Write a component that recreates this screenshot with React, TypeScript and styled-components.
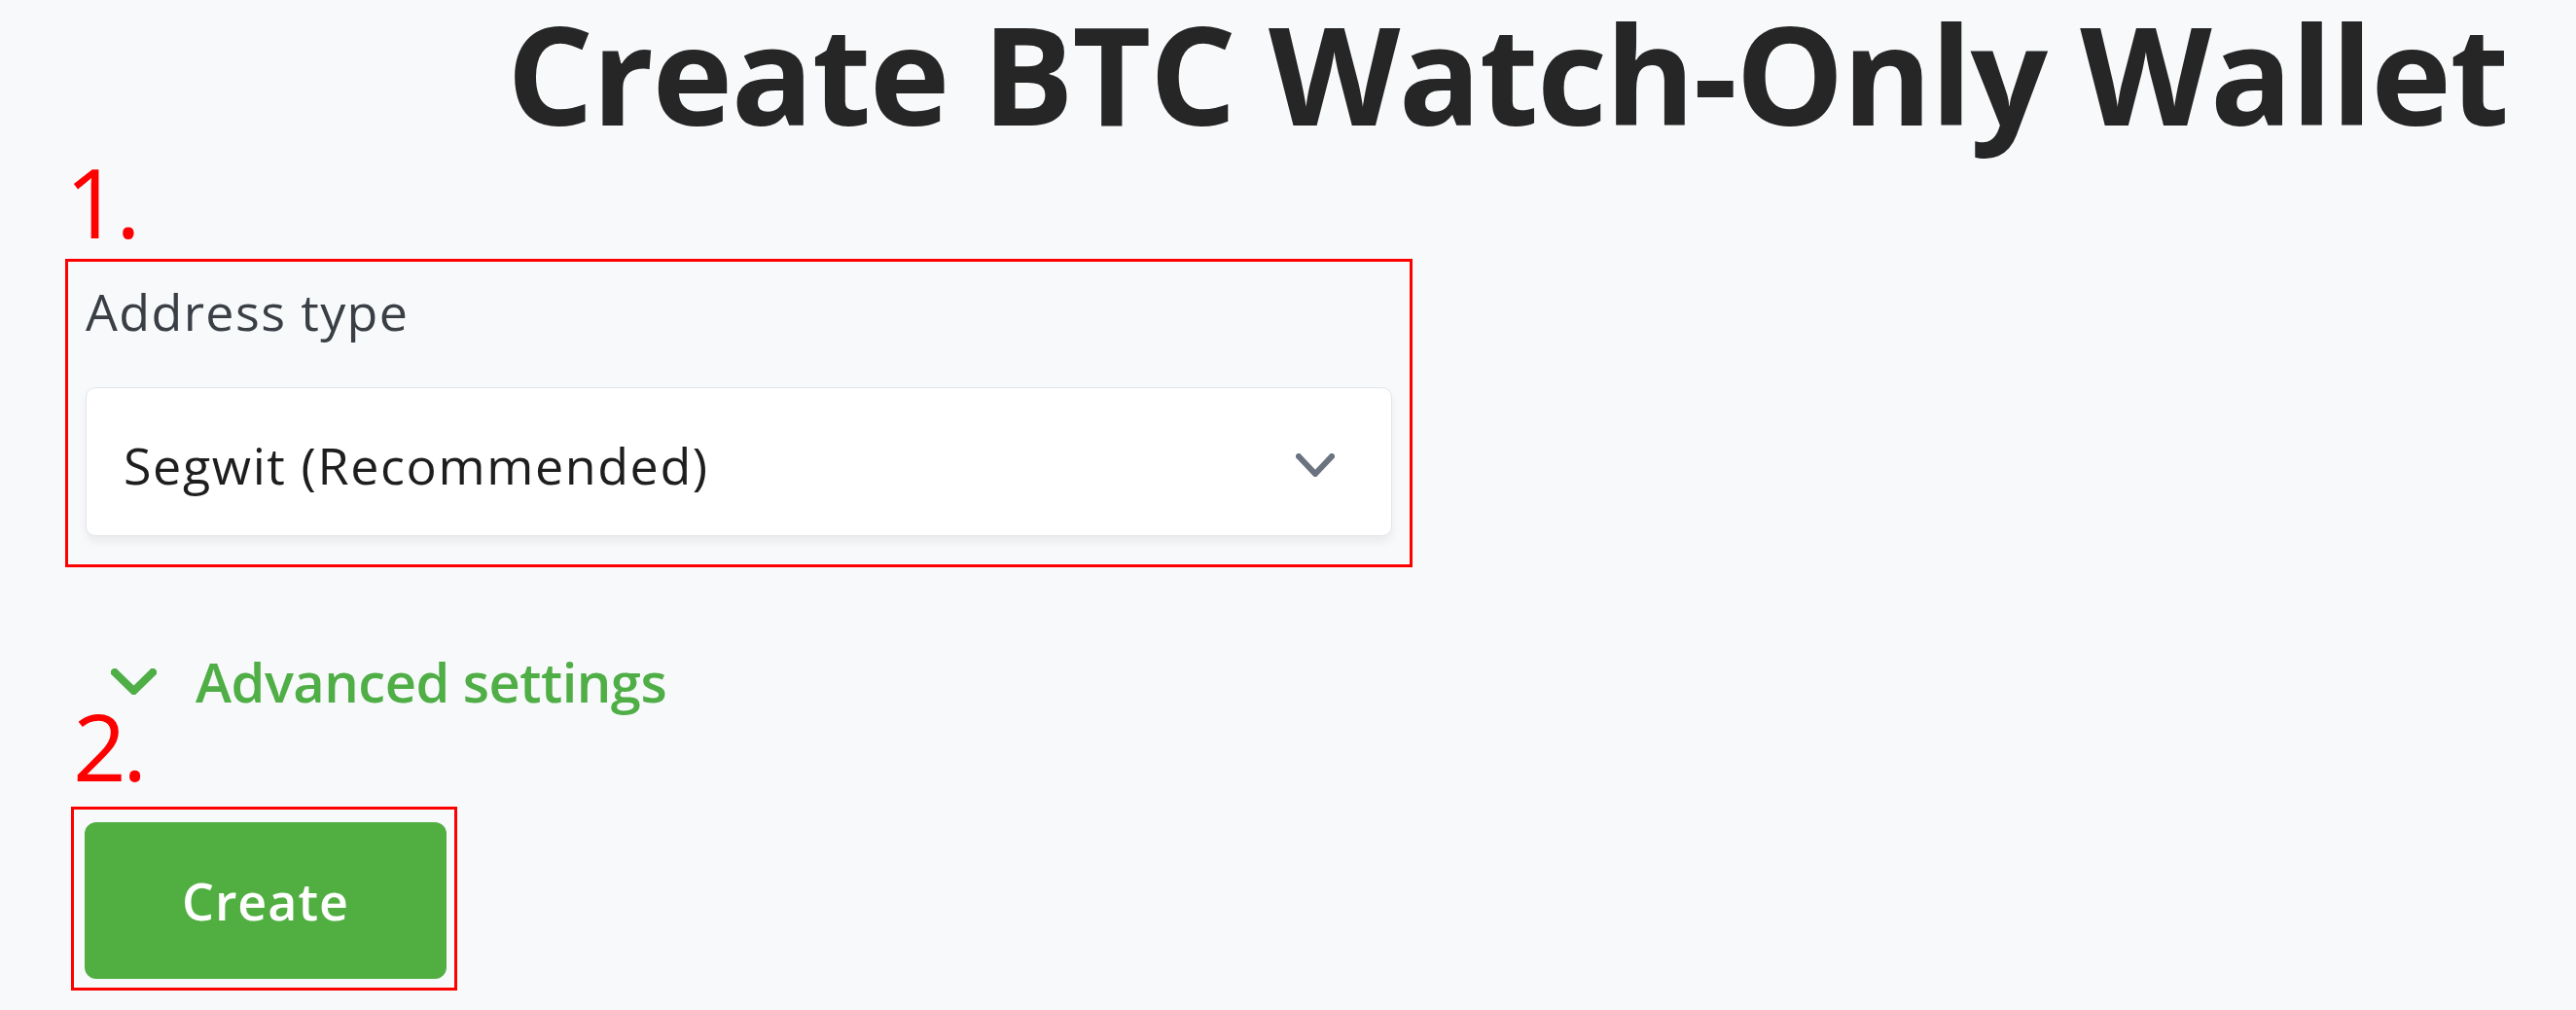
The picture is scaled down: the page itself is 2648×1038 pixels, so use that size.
import React from "react";
import styled, { createGlobalStyle } from "styled-components";

const GlobalStyle = createGlobalStyle`
  html, body {
    margin: 0;
    padding: 0;
    background: #f7f9fb;
  }
  body {
    font-family: "Open Sans", "Noto Sans", sans-serif;
  }
`;

const Page = styled.main`
  min-height: 1038px;
  box-sizing: border-box;
  padding: 0 0 0 67px;
  display: flex;
  flex-direction: column;
  align-items: flex-start;
  background: #f7f9fb;
`;

const Title = styled.h1`
  margin: 0 0 0 454px;
  font-size: 140px;
  line-height: 150px;
  font-weight: 700;
  letter-spacing: -1.6px;
  color: #262626;
  white-space: nowrap;
`;

const StepMarker = styled.div<{ $size: number; $top: number; $left: number }>`
  margin: ${(p) => p.$top}px 0 0 ${(p) => p.$left}px;
  font-size: ${(p) => p.$size}px;
  line-height: 70px;
  font-weight: 400;
  letter-spacing: -4px;
  color: #ff0000;
`;

const Highlight = styled.section<{ $top: number; $left: number }>`
  margin: ${(p) => p.$top}px 0 0 ${(p) => p.$left}px;
  border: 3px solid #ff0000;
  box-sizing: border-box;
`;

const FieldBox = styled(Highlight)`
  width: 1385px;
  padding: 16px 18px 29px 18px;
  display: flex;
  flex-direction: column;
  gap: 43px;
`;

const Label = styled.label`
  font-size: 52px;
  line-height: 70px;
  letter-spacing: 1.4px;
  color: #3a3f45;
`;

const Select = styled.div`
  height: 153px;
  box-sizing: border-box;
  border: 1px solid #e3e6ea;
  border-radius: 10px;
  background: #ffffff;
  box-shadow: 0 6px 10px rgba(0, 0, 0, 0.06);
  display: flex;
  align-items: center;
  justify-content: space-between;
  padding: 6px 58px 0 38px;
`;

const SelectValue = styled.span`
  font-size: 52px;
  line-height: 70px;
  letter-spacing: 1.6px;
  color: #1e1e1e;
`;

const Advanced = styled.button`
  margin: 87px 0 0 47px;
  padding: 0;
  border: 0;
  background: none;
  display: flex;
  align-items: center;
  gap: 40px;
  font-family: inherit;
  font-size: 56px;
  line-height: 60px;
  font-weight: 600;
  letter-spacing: -0.5px;
  color: #4fae45;
  cursor: pointer;
`;

const ButtonBox = styled(Highlight)`
  padding: 13px 8px 9px 11px;
`;

const CreateButton = styled.button`
  width: 372px;
  height: 161px;
  border: 0;
  border-radius: 12px;
  background: #51af42;
  color: #ffffff;
  font-family: inherit;
  font-size: 52px;
  font-weight: 600;
  letter-spacing: 1px;
  cursor: pointer;
`;

const ChevronDown = ({ color, width, height, stroke }: { color: string; width: number; height: number; stroke: number }) => (
  <svg width={width} height={height} viewBox={`0 0 ${width} ${height}`} fill="none">
    <polyline
      points={`${stroke / 2},${stroke / 2} ${width / 2},${height - stroke / 2} ${width - stroke / 2},${stroke / 2}`}
      stroke={color}
      strokeWidth={stroke}
      strokeLinecap="square"
      strokeLinejoin="miter"
    />
  </svg>
);

export default function App() {
  return (
    <>
      <GlobalStyle />
      <Page>
        <Title>Create BTC Watch-Only Wallet</Title>
        <StepMarker $size={98} $top={22} $left={0}>1.</StepMarker>
        <FieldBox $top={24} $left={0}>
          <Label>Address type</Label>
          <Select>
            <SelectValue>Segwit (Recommended)</SelectValue>
            <ChevronDown color="#6b7280" width={40} height={24} stroke={6} />
          </Select>
        </FieldBox>
        <Advanced>
          <ChevronDown color="#4fae45" width={47} height={27} stroke={8} />
          Advanced settings
        </Advanced>
        <StepMarker $size={96} $top={1} $left={8}>2.</StepMarker>
        <ButtonBox $top={28} $left={6}>
          <CreateButton>Create</CreateButton>
        </ButtonBox>
      </Page>
    </>
  );
}
